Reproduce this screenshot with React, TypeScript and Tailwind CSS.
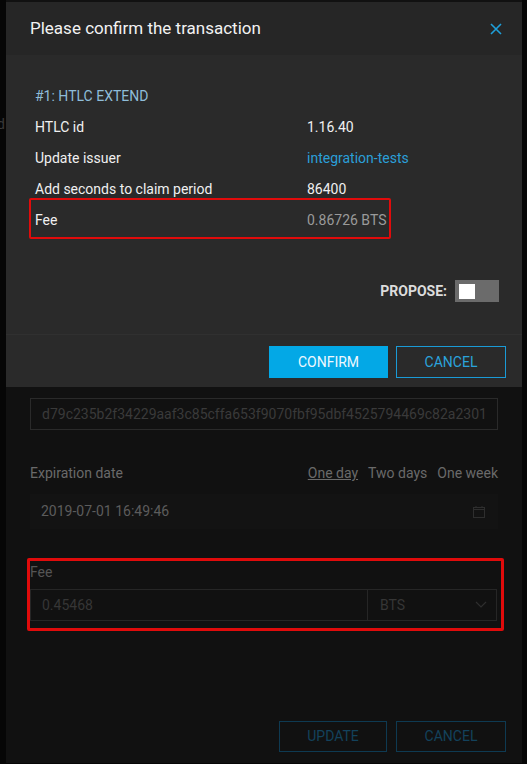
import React from "react";

const font = { fontFamily: "Roboto, 'Liberation Sans', Arial, sans-serif" };

function Row({ label, value, valueClass }: { label: string; value: string; valueClass: string }) {
  return (
    <div className="grid grid-cols-[272px_1fr] h-[31px] items-center">
      <span className="text-[14px] text-[#f0f0f0]">{label}</span>
      <span className={"text-[14px] " + valueClass}>{value}</span>
    </div>
  );
}

export default function App() {
  return (
    <div className="relative w-[527px] h-[764px] bg-[#060606] overflow-hidden" style={font}>
      <span className="absolute left-[-3px] top-[114px] text-[14px] text-[#3a3a3a]">d</span>

      {/* background (dimmed) modal */}
      <div className="ml-[6px] w-[516px] h-[763px] bg-[#111111] flex flex-col px-[24px]">
        <div className="h-[370px]" />
        <div className="text-[14px] leading-[18px] text-[#5a5a5a]">Preimage hash</div>
        <div className="mt-[10px] h-[32px] border border-[#2a2a2a] flex items-center px-[11px] overflow-hidden">
          <span className="whitespace-nowrap text-[14px] text-[#3a3a3a]">
            d79c235b2f34229aaf3c85cffa653f9070fbf95dbf4525794469c82a2301
          </span>
        </div>
        <div className="mt-[34px] flex items-center justify-between text-[14px] text-[#6a6a6a] leading-[18px]">
          <span>Expiration date</span>
          <div className="flex gap-[10px]">
            <span className="underline">One day</span>
            <span>Two days</span>
            <span>One week</span>
          </div>
        </div>
        <div className="mt-[12px] h-[35px] bg-[#131313] flex items-center justify-between pl-[11px] pr-[13px]">
          <span className="text-[14px] text-[#5c5c5c]">2019-07-01 16:49:46</span>
          <svg width="12" height="12" viewBox="0 0 12 12" fill="none" stroke="#2e2e2e" strokeWidth="1">
            <rect x="0.5" y="1.5" width="11" height="10" />
            <line x1="0.5" y1="3.5" x2="11.5" y2="3.5" />
            <line x1="3" y1="0" x2="3" y2="2" />
            <line x1="9" y1="0" x2="9" y2="2" />
          </svg>
        </div>
        <div className="relative mt-[34px]">
          <div className="text-[14px] leading-[18px] text-[#555555]">Fee</div>
          <div className="mt-[8px] h-[32px] flex border border-[#262626] ml-0 mr-[1px]">
            <div className="flex-1 flex items-center px-[11px] text-[14px] text-[#363636]">0.45468</div>
            <div className="w-[129px] border-l border-[#262626] flex items-center justify-between pl-[12px] pr-[9px] text-[14px] text-[#363636]">
              <span>BTS</span>
              <svg width="12" height="8" viewBox="0 0 12 8" fill="none" stroke="#2e2e2e" strokeWidth="1.2">
                <path d="M1 1 L6 6 L11 1" />
              </svg>
            </div>
          </div>
          <div className="absolute left-[-3px] top-[-5px] w-[477px] h-[73px] border-[3px] border-[#e00b0b] rounded-[2px]" />
        </div>
        <div className="flex-1" />
        <div className="flex justify-end gap-[9px] mr-[-8px] mb-[11px]">
          <div className="w-[108px] h-[31px] border border-[#0e3a52] flex items-center justify-center text-[14px] text-[#13425c]">UPDATE</div>
          <div className="w-[110px] h-[31px] border border-[#0e3a52] flex items-center justify-center text-[14px] text-[#13425c]">CANCEL</div>
        </div>
      </div>

      {/* confirm dialog overlay */}
      <div className="absolute left-[6px] top-[2px] w-[516px] bg-[#2a2a2a] flex flex-col">
        <div className="h-[53px] bg-[#262626] flex items-center justify-between pl-[24px] pr-[20px]">
          <span className="text-[17px] text-[#f2f2f2]">Please confirm the transaction</span>
          <svg width="12" height="12" viewBox="0 0 12 12" stroke="#1e9fd9" strokeWidth="1.6" fill="none">
            <path d="M1 1 L11 11 M11 1 L1 11" />
          </svg>
        </div>
        <div className="relative px-[29px] pt-[26px]">
          <div className="h-[31px] flex items-center text-[14px] text-[#8fbdd9]">#1: HTLC EXTEND</div>
          <Row label="HTLC id" value="1.16.40" valueClass="text-[#f0f0f0]" />
          <Row label="Update issuer" value="integration-tests" valueClass="text-[#2a9fd8]" />
          <Row label="Add seconds to claim period" value="86400" valueClass="text-[#f0f0f0]" />
          <Row label="Fee" value="0.86726 BTS" valueClass="text-[#9a9a9a]" />
          <div className="absolute left-[23px] top-[143px] w-[362px] h-[41px] border-[2px] border-[#e00b0b] rounded-[2px]" />
          <div className="mt-[44px] flex justify-end items-center gap-[8px] mr-[-6px]">
            <span className="text-[14px] font-bold text-[#dcdcdc]">PROPOSE:</span>
            <div className="w-[44px] h-[22px] bg-[#6b6b6b] flex items-center pl-[4px]">
              <div className="w-[16px] h-[15px] bg-white" />
            </div>
          </div>
          <div className="h-[32px]" />
        </div>
        <div className="border-t border-[#303030] flex justify-end gap-[8px] pr-[16px] pt-[11px] pb-[9px]">
          <div className="w-[119px] h-[32px] bg-[#03a8e6] flex items-center justify-center text-[14px] text-[#eef8ff]">CONFIRM</div>
          <div className="w-[110px] h-[32px] border border-[#1a9ad6] flex items-center justify-center text-[14px] text-[#2aa3dc]">CANCEL</div>
        </div>
      </div>
    </div>
  );
}
